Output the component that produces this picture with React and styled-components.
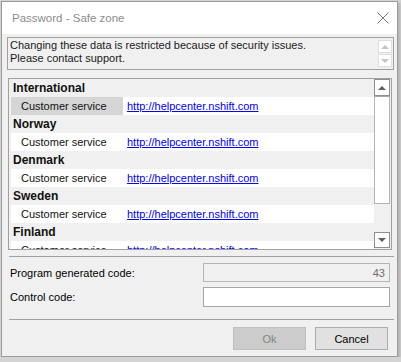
import React from 'react';
import styled, { createGlobalStyle } from 'styled-components';

const GlobalStyle = createGlobalStyle`
  html, body {
    margin: 0;
    padding: 0;
    background: #d4d4d4;
    font-family: "Liberation Sans", Arial, sans-serif;
    font-size: 11px;
    color: #000;
  }
`;

const Window = styled.div`
  box-sizing: border-box;
  margin: 1px 0 0 1px;
  width: 397px;
  height: 356px;
  border: 1px solid #9a9a9a;
  background: #f0f0f0;
  box-shadow: 2px 2px 3px rgba(0, 0, 0, 0.18);
  display: flex;
  flex-direction: column;
`;

const TitleBar = styled.div`
  height: 32px;
  background: #fff;
  display: flex;
  align-items: center;
  justify-content: space-between;
  padding-left: 10px;
  padding-right: 8px;
  .title {
    font-size: 11.5px;
    color: #8d8d8d;
  }
`;

const Client = styled.div`
  flex: 1;
  display: flex;
  flex-direction: column;
  padding: 3px 3px 0 5px;
`;

const Notice = styled.div`
  box-sizing: border-box;
  height: 33px;
  border: 1px solid #a0a0a0;
  display: flex;
  .text {
    flex: 1;
    padding: 1px 0 0 2px;
    line-height: 13px;
    color: #1a1a1a;
  }
`;

const MiniScroll = styled.div`
  display: flex;
  flex-direction: column;
  gap: 1px;
  padding: 2px 1px 0 0;
`;

const MiniButton = styled.div`
  box-sizing: border-box;
  width: 14px;
  height: 13px;
  border: 1px solid #dedede;
  background: #fff;
  display: flex;
  align-items: center;
  justify-content: center;
`;

const Arrow = styled.span`
  width: 0;
  height: 0;
  border-left: ${p => p.$size}px solid transparent;
  border-right: ${p => p.$size}px solid transparent;
  ${p => (p.$down ? 'border-top' : 'border-bottom')}: ${p => p.$size}px solid ${p => p.$color};
`;

const List = styled.div`
  box-sizing: border-box;
  margin: 8px 2px 0 1px;
  height: 172px;
  border: 1px solid #a0a0a0;
  display: flex;
  padding: 0 1px;
`;

const Rows = styled.div`
  flex: 1;
  overflow: hidden;
`;

const GroupRow = styled.div`
  height: 18px;
  line-height: 18px;
  padding-left: 3px;
  font-weight: bold;
  font-size: 12px;
  color: #111;
`;

const ItemRow = styled.div`
  height: 18px;
  line-height: 18px;
  display: flex;
  margin-left: 1px;
  background: #fff;
`;

const NameCell = styled.div`
  width: 112px;
  padding-left: 10px;
  box-sizing: border-box;
  background: ${p => (p.$selected ? '#d5d5d5' : '#fff')};
  color: #111;
`;

const LinkCell = styled.a`
  padding-left: 4px;
  color: #0000ff;
  text-decoration: underline;
  cursor: pointer;
`;

const ScrollBar = styled.div`
  width: 16px;
  display: flex;
  flex-direction: column;
  padding-bottom: 1px;
`;

const ScrollButton = styled.div`
  box-sizing: border-box;
  height: ${p => p.$h}px;
  border: 1px solid #8e8e8e;
  background: #fff;
  display: flex;
  align-items: center;
  justify-content: center;
`;

const Thumb = styled.div`
  box-sizing: border-box;
  height: 108px;
  border: 1px solid #b4b4b4;
  border-top-color: #a8a8a8;
  background: #fff;
`;

const Track = styled.div`
  flex: 1;
`;

const Separator = styled.div`
  height: 1px;
  background: #a0a0a0;
  margin: ${p => p.$top}px 0 0 2px;
`;

const FieldRow = styled.div`
  display: flex;
  align-items: center;
  justify-content: space-between;
  margin: ${p => p.$top}px 4px 0 3px;
  height: ${p => p.$h}px;
`;

const FieldInput = styled.div`
  box-sizing: border-box;
  width: 187px;
  height: 100%;
  border: 1px solid ${p => (p.$disabled ? '#b4b4b4' : '#a5a5a5')};
  background: ${p => (p.$disabled ? '#f0f0f0' : '#fff')};
  color: #6d6d6d;
  padding-right: 4px;
  display: flex;
  align-items: center;
  justify-content: flex-end;
`;

const ButtonBar = styled.div`
  display: flex;
  justify-content: flex-end;
  gap: 9px;
  margin: 7px 6px 0 0;
`;

const Button = styled.div`
  box-sizing: border-box;
  width: 73px;
  height: 23px;
  display: flex;
  align-items: center;
  justify-content: center;
  border: 1px solid ${p => (p.$disabled ? '#bfbfbf' : '#adadad')};
  background: ${p => (p.$disabled ? '#cccccc' : '#e1e1e1')};
  color: ${p => (p.$disabled ? '#838383' : '#000')};
`;

const CloseIcon = () => (
  <svg width="12" height="12" viewBox="0 0 12 12">
    <path d="M0.5 0.5 L11.5 11.5 M11.5 0.5 L0.5 11.5" stroke="#7a7a7a" strokeWidth="1" fill="none" />
  </svg>
);

const groups = ['International', 'Norway', 'Denmark', 'Sweden', 'Finland'];

export default function App() {
  return (
    <>
      <GlobalStyle />
      <Window>
        <TitleBar>
          <span className="title">Password - Safe zone</span>
          <CloseIcon />
        </TitleBar>
        <Client>
          <Notice>
            <div className="text">
              Changing these data is restricted because of security issues.
              <br />
              Please contact support.
            </div>
            <MiniScroll>
              <MiniButton>
                <Arrow $size={4} $color="#c6c6c6" />
              </MiniButton>
              <MiniButton>
                <Arrow $size={4} $color="#c6c6c6" $down />
              </MiniButton>
            </MiniScroll>
          </Notice>

          <List>
            <Rows>
              {groups.map((name, i) => (
                <React.Fragment key={name}>
                  <GroupRow>{name}</GroupRow>
                  <ItemRow>
                    <NameCell $selected={i === 0}>Customer service</NameCell>
                    <LinkCell>http://helpcenter.nshift.com</LinkCell>
                  </ItemRow>
                </React.Fragment>
              ))}
            </Rows>
            <ScrollBar>
              <ScrollButton $h={17}>
                <Arrow $size={4} $color="#606060" />
              </ScrollButton>
              <Thumb />
              <Track />
              <ScrollButton $h={16}>
                <Arrow $size={4} $color="#606060" $down />
              </ScrollButton>
            </ScrollBar>
          </List>

          <Separator $top={6} />
          <FieldRow $top={6} $h={19}>
            <span>Program generated code:</span>
            <FieldInput $disabled>43</FieldInput>
          </FieldRow>
          <FieldRow $top={5} $h={20}>
            <span>Control code:</span>
            <FieldInput />
          </FieldRow>
          <Separator $top={12} />
          <ButtonBar>
            <Button $disabled>Ok</Button>
            <Button>Cancel</Button>
          </ButtonBar>
        </Client>
      </Window>
    </>
  );
}
